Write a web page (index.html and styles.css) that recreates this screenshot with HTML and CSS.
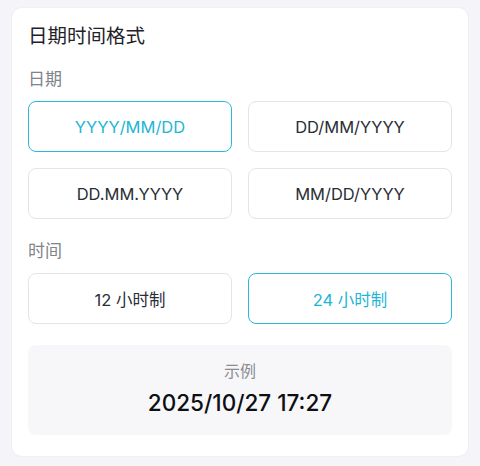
FILE: index.html
```html
<!DOCTYPE html>
<html lang="zh">
<head>
<meta charset="utf-8">
<title>日期时间格式</title>
<link rel="stylesheet" href="styles.css">
</head>
<body>
<div class="card">
  <div class="title">日期时间格式</div>
  <div class="label">日期</div>
  <div class="options">
    <button class="opt active">YYYY/MM/DD</button>
    <button class="opt">DD/MM/YYYY</button>
    <button class="opt">DD.MM.YYYY</button>
    <button class="opt">MM/DD/YYYY</button>
  </div>
  <div class="label label-time">时间</div>
  <div class="options">
    <button class="opt">12 小时制</button>
    <button class="opt active">24 小时制</button>
  </div>
  <div class="example">
    <div class="ex-label">示例</div>
    <div class="ex-value">2025/10/27 17:27</div>
  </div>
</div>
</body>
</html>
```
FILE: styles.css
```css
html, body {
  margin: 0;
  background: #f5f5f9;
}
body {
  padding: 8px 12px 10px;
  font-family: Inter, "Noto Sans CJK SC", sans-serif;
}
.card {
  background: #ffffff;
  border-radius: 10px;
  padding: 15px 16px 21px;
  box-shadow: 0 0 0 1px #efeff4;
}
.title {
  font-size: 19.5px;
  line-height: 26px;
  color: #1f2329;
}
.label {
  margin-top: 18px;
  font-size: 17px;
  line-height: 24px;
  color: #80848b;
}
.label-time {
  margin-top: 20px;
}
.options {
  margin-top: 10px;
  display: grid;
  grid-template-columns: 1fr 1fr;
  gap: 16px;
}
.opt {
  height: 51px;
  border: 1px solid #e4e5e9;
  border-radius: 8px;
  background: #ffffff;
  font-family: Inter, "Noto Sans CJK SC", sans-serif;
  font-size: 16.5px;
  color: #2a2e35;
  padding: 0;
}
.opt.active {
  border-color: #2bb9da;
  color: #1fb5d6;
}
.example {
  margin-top: 21px;
  height: 90px;
  box-sizing: border-box;
  background: #f7f7fa;
  border-radius: 8px;
  padding-top: 15px;
  text-align: center;
}
.ex-label {
  font-size: 16px;
  line-height: 22px;
  color: #8b8d93;
}
.ex-value {
  margin-top: 6px;
  font-size: 22.5px;
  line-height: 30px;
  font-weight: 500;
  color: #0d0f12;
}
```
